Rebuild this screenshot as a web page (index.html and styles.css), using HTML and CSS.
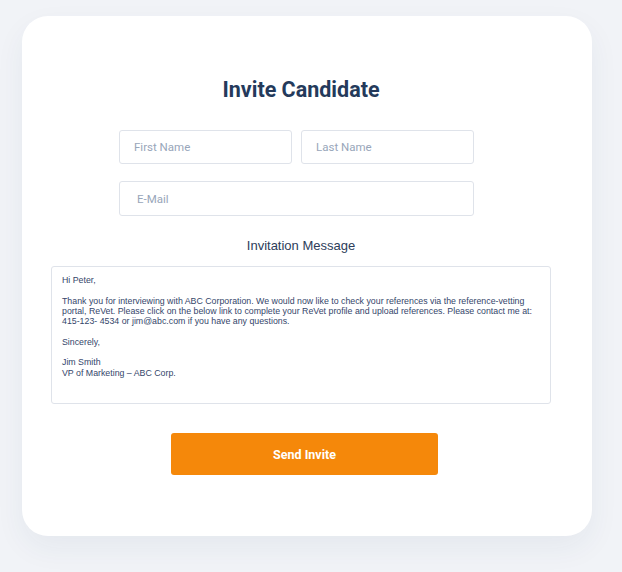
FILE: index.html
```html
<!DOCTYPE html>
<html lang="en">
<head>
<meta charset="utf-8">
<title>Invite Candidate</title>
<link rel="stylesheet" href="styles.css">
</head>
<body>
<div class="card">
  <h1 class="title">Invite Candidate</h1>
  <div class="fields">
    <div class="row">
      <input class="field" type="text" placeholder="First Name">
      <input class="field" type="text" placeholder="Last Name">
    </div>
    <input class="field email" type="text" placeholder="E-Mail">
  </div>
  <h2 class="label">Invitation Message</h2>
  <div class="message">
    <p>Hi Peter,</p>
    <p>Thank you for interviewing with ABC Corporation. We would now like to check your references via the reference-vetting<br>portal, ReVet. Please click on the below link to complete your ReVet profile and upload references. Please contact me at:<br>415-123- 4534 or jim@abc.com if you have any questions.</p>
    <p>Sincerely,</p>
    <p>Jim Smith<br>VP of Marketing – ABC Corp.</p>
  </div>
  <button class="send" type="button">Send Invite</button>
</div>
</body>
</html>
```
FILE: styles.css
```css
html, body {
  margin: 0;
  padding: 0;
}
body {
  background: #f1f3f7;
  width: 622px;
  height: 572px;
  overflow: hidden;
  padding-top: 16px;
  box-sizing: border-box;
  font-family: Roboto, "Liberation Sans", sans-serif;
}
.card {
  margin-left: 22px;
  width: 570px;
  height: 520px;
  box-sizing: border-box;
  background: #fff;
  border-radius: 26px;
  box-shadow: 0 12px 30px rgba(40, 60, 100, 0.06);
  padding: 61px 41px 0 29px;
  display: flex;
  flex-direction: column;
}
.title {
  margin: 0;
  text-align: center;
  font-size: 21.5px;
  line-height: 26px;
  font-weight: 700;
  color: #243a5b;
}
.fields {
  margin: 27px 0 0 68px;
  width: 355px;
  display: flex;
  flex-direction: column;
  gap: 17px;
}
.row {
  display: flex;
  gap: 9px;
}
.field {
  flex: 1;
  min-width: 0;
  height: 34px;
  box-sizing: border-box;
  border: 1px solid #dfe3ea;
  border-radius: 3px;
  padding: 0 14px;
  font-family: Roboto, "Liberation Sans", sans-serif;
  font-size: 11.5px;
  color: #243a5b;
  background: #fff;
  outline: none;
}
.field::placeholder {
  color: #98a6ba;
}
.email {
  flex: none;
  width: 100%;
  height: 35px;
  padding-left: 17px;
}
.label {
  margin: 22px 0 0;
  text-align: center;
  font-family: "Liberation Sans", Arial, sans-serif;
  font-size: 13px;
  line-height: 16px;
  font-weight: 500;
  color: #2d3d5a;
}
.message {
  margin-top: 12px;
  height: 138px;
  box-sizing: border-box;
  border: 1px solid #dfe3ea;
  border-radius: 3px;
  padding: 8px 10px 0 10px;
  font-family: "Liberation Sans", Arial, sans-serif;
  font-size: 8.8px;
  line-height: 10.3px;
  color: #34466a;
  white-space: nowrap;
}
.message p {
  margin: 0 0 10.3px;
}
.send {
  margin: 29px 0 0 120px;
  width: 267px;
  height: 42px;
  border: none;
  border-radius: 3px;
  background: #f5880a;
  color: #fff;
  font-family: Roboto, "Liberation Sans", sans-serif;
  font-size: 12.5px;
  font-weight: 700;
  cursor: pointer;
}
```
